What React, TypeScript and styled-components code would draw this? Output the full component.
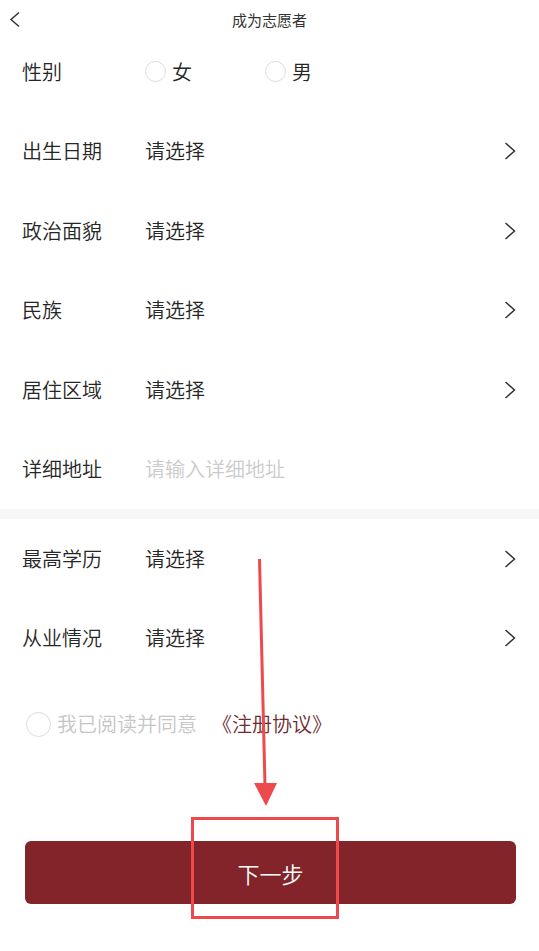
import React from "react";
import styled, { createGlobalStyle } from "styled-components";

const Global = createGlobalStyle`
  html, body { margin: 0; padding: 0; background: #fff; }
  body { font-family: "Noto Sans CJK SC", "Noto Sans", sans-serif; color: #333; font-weight: 350; }
  * { box-sizing: border-box; }
`;

const Page = styled.div`
  position: relative;
  width: 539px;
  height: 951px;
  background: #fff;
  overflow: hidden;
  display: flex;
  flex-direction: column;
`;

const Header = styled.header`
  height: 32px;
  display: flex;
  align-items: center;
  justify-content: center;
  position: relative;
  flex-shrink: 0;
`;

const BackBtn = styled.div`
  position: absolute;
  left: 9px;
  top: 11px;
  width: 14px;
  height: 18px;
  display: flex;
`;

const Title = styled.h1`
  margin: 0;
  margin-top: 6px;
  font-size: 15px;
  font-weight: 400;
  line-height: 1;
  color: #333;
`;

const Section = styled.section`
  display: flex;
  flex-direction: column;
`;

const Divider = styled.div`
  height: 10px;
  background: #f7f7f7;
`;

const Row = styled.div`
  height: 79.5px;
  display: flex;
  align-items: center;
  padding: 0 22px 0 22px;
  flex-shrink: 0;
`;

const Label = styled.span`
  width: 123px;
  font-size: 20px;
  line-height: 1;
  color: #262626;
  flex-shrink: 0;
`;

const Value = styled.span<{ $placeholder?: boolean }>`
  flex: 1;
  font-size: 20px;
  line-height: 1;
  color: ${(p) => (p.$placeholder ? "#cbcbcb" : "#262626")};
`;

const Chevron = styled.svg`
  width: 12px;
  height: 20px;
  flex-shrink: 0;
  margin-right: 1px;
`;

const RadioGroup = styled.div`
  display: flex;
  align-items: center;
`;

const RadioOption = styled.label<{ $gap: number }>`
  display: flex;
  align-items: center;
  width: ${(p) => p.$gap}px;
  font-size: 20px;
  line-height: 1;
  color: #262626;
`;

const RadioCircle = styled.span<{ $size: number }>`
  width: ${(p) => p.$size}px;
  height: ${(p) => p.$size}px;
  border-radius: 50%;
  border: 1px solid #dcdcdc;
  margin-right: 6px;
  flex-shrink: 0;
`;

const Agreement = styled.div`
  height: 92px;
  display: flex;
  align-items: center;
  padding-left: 26px;
  flex-shrink: 0;
`;

const AgreeText = styled.span`
  font-size: 20px;
  line-height: 1;
  color: #c6c6c6;
`;

const ProtocolLink = styled.span`
  font-size: 20px;
  line-height: 1;
  color: #6e2a2e;
  margin-left: 15px;
`;

const NextButton = styled.button`
  margin: 71px 23px 0 25px;
  height: 63px;
  border: none;
  border-radius: 6px;
  background: #822429;
  color: #fff;
  font-family: inherit;
  font-weight: 350;
  font-size: 22px;
  line-height: 1;
  display: flex;
  align-items: center;
  justify-content: center;
  padding: 0;
  flex-shrink: 0;
`;

const Overlay = styled.svg`
  position: absolute;
  left: 0;
  top: 0;
  width: 539px;
  height: 951px;
  pointer-events: none;
`;

const RightArrow = () => (
  <Chevron viewBox="0 0 12 20">
    <polyline points="1.5,2 10.5,10 1.5,18" fill="none" stroke="#333" strokeWidth="1.5" />
  </Chevron>
);

const selectRows1 = ["出生日期", "政治面貌", "民族", "居住区域"];
const selectRows2 = ["最高学历", "从业情况"];

export default function App() {
  return (
    <>
      <Global />
      <Page>
        <Header>
          <BackBtn>
            <svg width="14" height="18" viewBox="0 0 14 18">
              <polyline points="10,1.5 2,8.5 10,15.5" fill="none" stroke="#333" strokeWidth="1.5" />
            </svg>
          </BackBtn>
          <Title>成为志愿者</Title>
        </Header>
        <Section>
          <Row>
            <Label>性别</Label>
            <RadioGroup>
              <RadioOption $gap={120}>
                <RadioCircle $size={21} />女
              </RadioOption>
              <RadioOption $gap={60}>
                <RadioCircle $size={21} />男
              </RadioOption>
            </RadioGroup>
          </Row>
          {selectRows1.map((l) => (
            <Row key={l}>
              <Label>{l}</Label>
              <Value>请选择</Value>
              <RightArrow />
            </Row>
          ))}
          <Row>
            <Label>详细地址</Label>
            <Value $placeholder>请输入详细地址</Value>
          </Row>
        </Section>
        <Divider />
        <Section>
          {selectRows2.map((l) => (
            <Row key={l}>
              <Label>{l}</Label>
              <Value>请选择</Value>
              <RightArrow />
            </Row>
          ))}
        </Section>
        <Agreement>
          <RadioCircle $size={25} />
          <AgreeText>我已阅读并同意</AgreeText>
          <ProtocolLink>《注册协议》</ProtocolLink>
        </Agreement>
        <NextButton>下一步</NextButton>
        <Overlay viewBox="0 0 539 951">
          <line x1="259.5" y1="559" x2="265" y2="786" stroke="#ee4a4e" strokeWidth="3" />
          <polygon points="254,783 277,783 266,806" fill="#ee4a4e" />
          <rect x="192.5" y="818.5" width="145" height="99" fill="none" stroke="#ee4a4e" strokeWidth="3" />
        </Overlay>
      </Page>
    </>
  );
}
